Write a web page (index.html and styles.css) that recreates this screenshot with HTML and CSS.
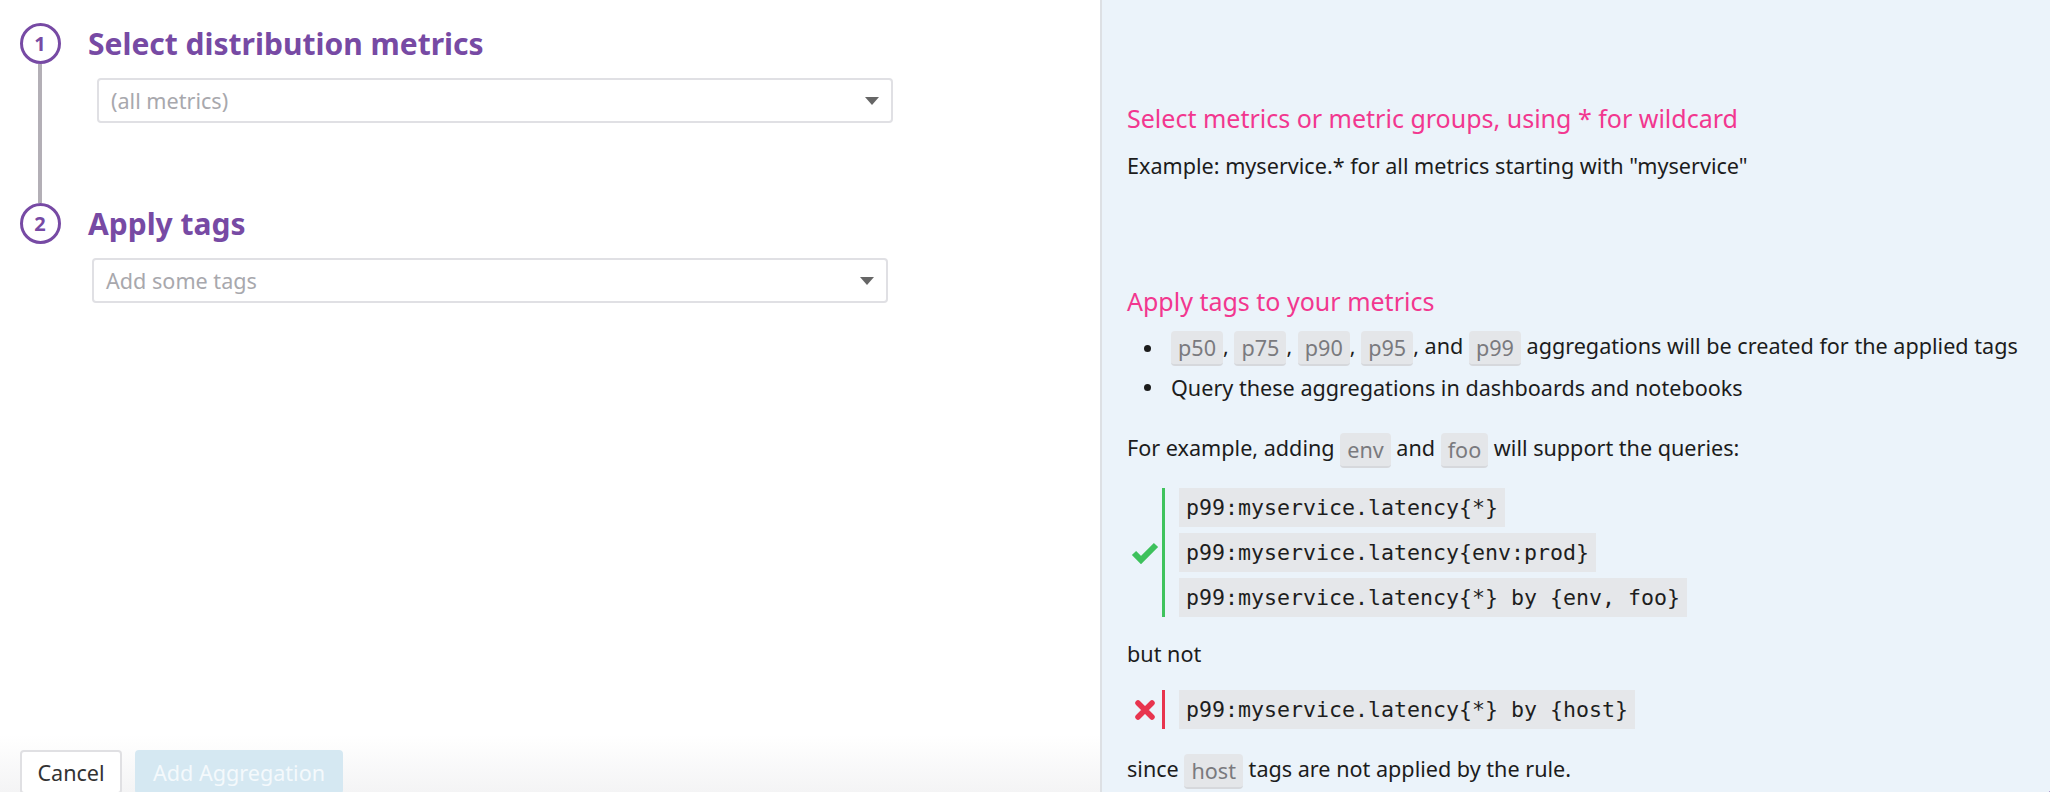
FILE: index.html
```html
<!DOCTYPE html>
<html lang="en">
<head>
<meta charset="utf-8">
<title>Add Aggregation</title>
<link rel="stylesheet" href="styles.css">
</head>
<body>
<div class="app">
  <main class="editor">
    <div class="steps">
      <section class="step step-first">
        <div class="marker">
          <span class="num">1</span>
          <span class="rail"></span>
        </div>
        <div class="step-body">
          <h2 class="step-title">Select distribution metrics</h2>
          <div class="select select-metrics">
            <span class="placeholder">(all metrics)</span>
            <span class="caret"></span>
          </div>
        </div>
      </section>
      <section class="step">
        <div class="marker">
          <span class="num">2</span>
        </div>
        <div class="step-body">
          <h2 class="step-title">Apply tags</h2>
          <div class="select select-tags">
            <span class="placeholder">Add some tags</span>
            <span class="caret"></span>
          </div>
        </div>
      </section>
    </div>
    <footer class="actions">
      <button class="btn btn-cancel" type="button">Cancel</button>
      <button class="btn btn-primary" type="button" disabled>Add Aggregation</button>
    </footer>
  </main>

  <aside class="help">
    <section class="help-section">
      <h3 class="help-title">Select metrics or metric groups, using * for wildcard</h3>
      <p class="help-text">Example: myservice.* for all metrics starting with "myservice"</p>
    </section>

    <section class="help-section help-tags">
      <h3 class="help-title">Apply tags to your metrics</h3>
      <ul class="bullets">
        <li><span><code class="chip">p50</code>, <code class="chip">p75</code>, <code class="chip">p90</code>, <code class="chip">p95</code>, and <code class="chip">p99</code> aggregations will be created for the applied tags</span></li>
        <li><span>Query these aggregations in dashboards and notebooks</span></li>
      </ul>
      <p class="help-text">For example, adding <code class="chip">env</code> and <code class="chip">foo</code> will support the queries:</p>

      <div class="queries queries-ok">
        <div class="verdict">
          <svg width="28" height="22" viewBox="0 0 28 22" aria-hidden="true"><polyline points="3,11 10,18 25,3" fill="none" stroke="#3dc15c" stroke-width="6"/></svg>
        </div>
        <div class="query-list">
          <code class="query">p99:myservice.latency{*}</code>
          <code class="query">p99:myservice.latency{env:prod}</code>
          <code class="query">p99:myservice.latency{*} by {env, foo}</code>
        </div>
      </div>

      <p class="help-text">but not</p>

      <div class="queries queries-bad">
        <div class="verdict">
          <svg width="22" height="22" viewBox="0 0 22 22" aria-hidden="true"><path d="M4 4 L18 18 M18 4 L4 18" fill="none" stroke="#e8344e" stroke-width="5.5" stroke-linecap="round"/></svg>
        </div>
        <div class="query-list">
          <code class="query">p99:myservice.latency{*} by {host}</code>
        </div>
      </div>

      <p class="help-text">since <code class="chip">host</code> tags are not applied by the rule.</p>
    </section>
  </aside>
</div>
<span class="launcher"></span>
</body>
</html>
```

FILE: styles.css
```css
html, body {
  margin: 0;
  padding: 0;
  height: 100%;
  overflow: hidden;
}

body {
  font-family: "Noto Sans", "Open Sans", sans-serif;
  color: #1c1c1c;
  background: #ffffff;
}

.app {
  display: flex;
  height: 792px;
}

/* ---------- left editor ---------- */
.editor {
  width: 1100px;
  flex: none;
  display: flex;
  flex-direction: column;
  background: #ffffff;
}

.steps {
  flex: 1;
  padding: 23px 0 0 20px;
}

.step {
  display: flex;
  gap: 28px;
}

.step-first .step-body {
  padding-bottom: 80px;
}

.marker {
  width: 40px;
  flex: none;
  display: flex;
  flex-direction: column;
  align-items: center;
}

.num {
  box-sizing: border-box;
  width: 41px;
  height: 41px;
  border: 3px solid #774aa4;
  border-radius: 50%;
  display: flex;
  align-items: center;
  justify-content: center;
  color: #774aa4;
  font-weight: 700;
  font-size: 20px;
  line-height: 1;
}

.rail {
  flex: 1;
  width: 4px;
  background: #b3afb6;
}

.step-title {
  margin: 0;
  height: 41px;
  line-height: 41px;
  font-size: 30px;
  font-weight: 700;
  color: #774aa4;
}

.select {
  box-sizing: border-box;
  width: 796px;
  height: 45px;
  margin-top: 14px;
  border: 2px solid #e0e0e4;
  border-radius: 4px;
  display: flex;
  align-items: center;
  justify-content: space-between;
  padding: 0 12px 0 12px;
  background: #fff;
}

.select-metrics { margin-left: 9px; }
.select-tags { margin-left: 4px; }

.placeholder {
  color: #a8a8ad;
  font-size: 21.6px;
}

.caret {
  width: 0;
  height: 0;
  border-left: 7px solid transparent;
  border-right: 7px solid transparent;
  border-top: 8px solid #666666;
}

.actions {
  height: 57px;
  flex: none;
  box-sizing: border-box;
  padding: 15px 20px 0;
  display: flex;
  gap: 13px;
  align-items: flex-start;
  background: linear-gradient(#ffffff, #f4f4f5);
}

.btn {
  font-family: "Noto Sans", "Open Sans", sans-serif;
  font-size: 21.6px;
  height: 44px;
  border-radius: 4px;
  padding: 0 8px;
}

.btn-cancel {
  width: 102px;
  background: #ffffff;
  border: 2px solid #e0e0e3;
  color: #333333;
}

.btn-primary {
  width: 208px;
  background: #d5e8f2;
  border: 2px solid #d5e8f2;
  color: #f4f9fc;
}

/* ---------- right help ---------- */
.help {
  flex: 1;
  box-sizing: border-box;
  border-left: 2px solid #dde0e4;
  background: #ebf3fa;
  padding: 103px 20px 0 25px;
}

.help-section + .help-section {
  margin-top: 106px;
}

.help-title {
  margin: 0;
  font-size: 25px;
  line-height: 30px;
  font-weight: 400;
  color: #f2378f;
}

.help-text {
  margin: 19px 0 0;
  font-size: 21.6px;
  line-height: 28px;
}

.bullets {
  list-style: none;
  margin: 13px 0 0;
  padding: 0;
  font-size: 21.6px;
}

.bullets li {
  display: flex;
  align-items: center;
  height: 39px;
  padding-left: 17px;
}

.bullets li::before {
  content: "";
  flex: none;
  width: 7px;
  height: 7px;
  border-radius: 50%;
  background: #1c1c1c;
  margin-right: 20px;
}

.chip {
  display: inline-block;
  font-family: "Noto Sans", "Open Sans", sans-serif;
  font-size: 21.6px;
  line-height: 33px;
  padding: 0 7px;
  margin: 0;
  color: #7a7a7e;
  background: #e4e6e9;
  border-bottom: 2px solid #d6d8dc;
  border-radius: 4px;
  vertical-align: middle;
}

.help-tags .help-text:first-of-type {
  margin-top: 26px;
}

.queries {
  display: flex;
  align-items: center;
}

.queries-ok { margin-top: 20px; }
.queries-bad { margin-top: 22px; }

.queries-ok + .help-text {
  margin-top: 23px;
}

.verdict {
  width: 35px;
  flex: none;
  display: flex;
  justify-content: center;
}

.query-list {
  display: flex;
  flex-direction: column;
  align-items: flex-start;
  gap: 6px;
  padding-left: 14px;
}

.queries-ok .query-list { border-left: 3px solid #3fc35d; }
.queries-bad .query-list { border-left: 3px solid #e8344e; }

.query {
  font-family: "DejaVu Sans Mono", "Liberation Mono", monospace;
  font-size: 21.6px;
  line-height: 39px;
  padding: 0 7px;
  background: #e5e7ea;
  color: #1e1e1e;
}

.queries-bad + .help-text {
  margin-top: 25px;
}

.launcher {
  position: fixed;
  right: -56px;
  bottom: -52px;
  width: 64px;
  height: 64px;
  border-radius: 50%;
  background: #774aa4;
}
```
